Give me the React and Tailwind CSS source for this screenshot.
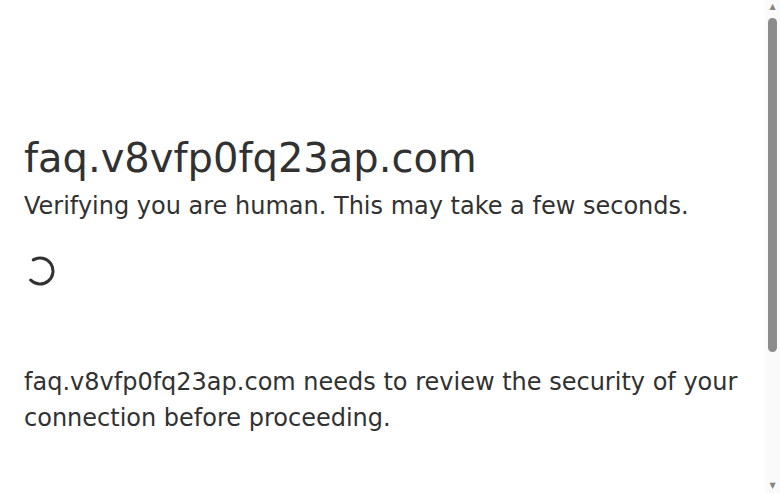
import React from 'react';

const Spinner = () => (
  <svg width="30" height="30" viewBox="0 0 30 30" fill="none" className="block">
    <path
      d="M8.3 3.86 A13 13 0 1 1 5.65 24.03"
      stroke="#313131"
      strokeWidth="3"
      strokeLinecap="round"
    />
  </svg>
);

// Barra de desplazamiento clásica del navegador
const ScrollBar = () => (
  <div className="w-[15px] shrink-0 h-[493px] bg-[#fafafa] flex flex-col items-center">
    <div className="h-[13px] w-full flex items-center justify-center text-[8px] leading-none text-[#858585]">▲</div>
    <div className="mt-[5px] w-[9px] h-[334px] rounded-full bg-[#8c8c8c]" />
    <div className="flex-1" />
    <div className="h-[15px] w-full flex items-center justify-center text-[8px] leading-none text-[#858585]">▼</div>
  </div>
);

const App = () => {
  return (
    <div
      className="h-[493px] flex bg-white text-[#313131] overflow-hidden"
      style={{ fontFamily: '"DejaVu Sans", sans-serif' }}
    >
      {/* Contenido principal del desafío */}
      <div className="flex-1 min-w-0 pt-32 pl-6 pr-6">
        <h1 className="text-[40px] leading-[60px] font-normal">faq.v8vfp0fq23ap.com</h1>
        <h2 className="text-2xl leading-9 font-normal">
          Verifying you are human. This may take a few seconds.
        </h2>

        <div className="mt-8 ml-px">
          <Spinner />
        </div>

        <p className="mt-[78px] text-2xl leading-9">
          faq.v8vfp0fq23ap.com needs to review the security of your connection before proceeding.
        </p>
      </div>

      <ScrollBar />
    </div>
  );
};

export default App;
